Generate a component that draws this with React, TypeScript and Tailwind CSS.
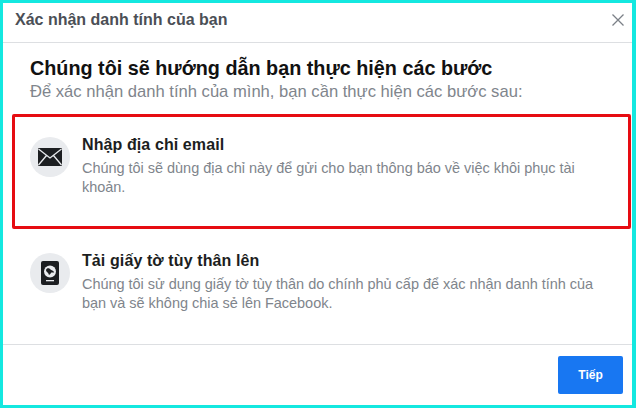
const font = "font-['Liberation_Sans',Arial,sans-serif]";

function MailIcon() {
  return (
    <svg width="24" height="18" viewBox="0 0 24 18">
      <rect x="0" y="0" width="24" height="18" rx="1" fill="#1c1e21" />
      <path d="M0.5 1 L12 10 L23.5 1 M0.5 17 L8.5 7.5 M23.5 17 L15.5 7.5" fill="none" stroke="#e9ebee" strokeWidth="1.3" />
    </svg>
  );
}

function PassportIcon() {
  return (
    <svg width="18" height="24" viewBox="0 0 18 24">
      <rect x="0" y="0" width="18" height="24" rx="2" fill="#1c1e21" />
      <circle cx="9" cy="10.5" r="6" fill="#e9ebee" />
      <path d="M6 7.5 C7.5 6.8 9 7.5 9.8 8.8 C11 9.2 12.8 10.2 13.2 11.5 C12 11.8 11 11.3 10 11.7 C9.6 12.6 9 13.5 8 14 C7.6 12.8 7.3 12 6.2 11.2 C5.2 10.4 5 9.5 5 8.8 Z" fill="#1c1e21" />
      <rect x="5" y="19" width="8" height="1.3" fill="#e9ebee" />
    </svg>
  );
}

function Step({ icon, title, children }: { icon: React.ReactNode; title: string; children: React.ReactNode }) {
  return (
    <div className="flex gap-3">
      <div className="w-10 h-10 mt-[20px] rounded-full bg-[#e9ebee] flex items-center justify-center shrink-0">{icon}</div>
      <div className="w-[528px] pt-[17px]">
        <div className="text-[16px] leading-[22px] font-bold text-[#1c1e21] tracking-[0.1px]">{title}</div>
        <div className="text-[14.5px] leading-[19px] mt-[3px] text-[#80858c] tracking-[-0.03px]">{children}</div>
      </div>
    </div>
  );
}

export default function App() {
  return (
    <div className={`w-[636px] h-[408px] bg-[#14e8e0] pt-[3px] pl-[3px] pr-[4px] pb-[3px] overflow-hidden ${font}`}>
      <div className="h-full bg-white flex flex-col">
        <div className="h-10 shrink-0 border-b border-[#dddfe2] flex items-center justify-between pl-[12px] pr-[8px] pb-[5px]">
          <span className="text-[16px] font-bold text-[#4b4f56]">Xác nhận danh tính của bạn</span>
          <svg width="12" height="12" viewBox="0 0 12 12">
            <path d="M0.5 0.5 L11.5 11.5 M11.5 0.5 L0.5 11.5" stroke="#7b8087" strokeWidth="1.3" />
          </svg>
        </div>
        <div className="flex-1 flex flex-col">
          <div className="pl-[27px] pt-[12px]">
            <h1 className="text-[19.8px] leading-[26px] font-bold text-[#111]">Chúng tôi sẽ hướng dẫn bạn thực hiện các bước</h1>
            <p className="text-[16.6px] leading-[20px] text-[#80858c] mt-[1px]">Để xác nhận danh tính của mình, bạn cần thực hiện các bước sau:</p>
          </div>
          <div className="mt-[12px] ml-[9px] mr-[1px] h-[115px] border-[3px] border-[#e60c12] rounded-[2px] pl-[15px]">
            <Step icon={<MailIcon />} title="Nhập địa chỉ email">
              Chúng tôi sẽ dùng địa chỉ này để gửi cho bạn thông báo về việc khôi phục tài khoản.
            </Step>
          </div>
          <div className="pl-[27px] mt-[4px]">
            <Step icon={<PassportIcon />} title="Tải giấy tờ tùy thân lên">
              Chúng tôi sử dụng giấy tờ tùy thân do chính phủ cấp để xác nhận danh tính của bạn và sẽ không chia sẻ lên Facebook.
            </Step>
          </div>
        </div>
        <div className="h-[61px] shrink-0 border-t border-[#dddfe2] flex items-start justify-end pt-[11px] pr-[9px]">
          <button className="w-[65px] h-[38px] bg-[#1877f2] rounded-[2px] text-white text-[12px] font-bold">Tiếp</button>
        </div>
      </div>
    </div>
  );
}
